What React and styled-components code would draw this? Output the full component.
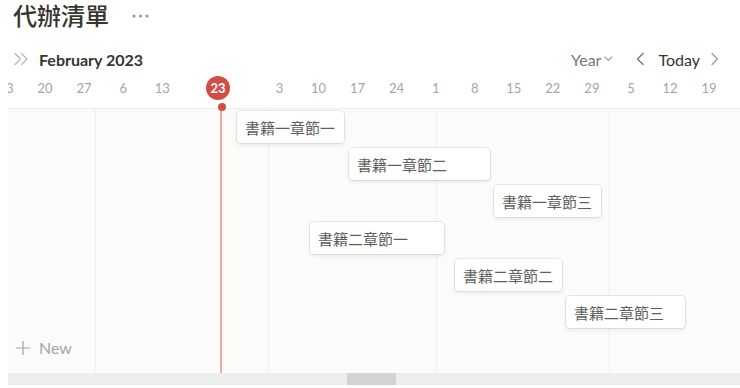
import React from 'react';
import styled, { createGlobalStyle } from 'styled-components';

const GlobalStyle = createGlobalStyle`
  html, body {
    margin: 0;
    padding: 0;
    background: #fff;
  }
  body {
    font-family: "Lato", "Noto Sans CJK TC", sans-serif;
    color: #37352f;
  }
`;

// page x of the first tick, one week apart
const TICK_START = 6;
const WEEK = 39.06;
const OFFSET = 8; // timeline starts 8px in from the page edge

const ticks = ['13', '20', '27', '6', '13', null, null, '3', '10', '17', '24', '1', '8', '15', '22', '29', '5', '12', '19'];

const monthLines = [95, 268, 436, 609];

const tasks = [
  { title: '書籍一章節一', x: 237, width: 107 },
  { title: '書籍一章節二', x: 349, width: 141 },
  { title: '書籍一章節三', x: 494, width: 107 },
  { title: '書籍二章節一', x: 310, width: 134 },
  { title: '書籍二章節二', x: 455, width: 107 },
  { title: '書籍二章節三', x: 566, width: 119 }
];

const Icon = ({ w, h, d, color, sw = 1.3 }) => (
  <svg width={w} height={h} viewBox={`0 0 ${w} ${h}`} fill="none">
    <path d={d} stroke={color} strokeWidth={sw} strokeLinecap="round" strokeLinejoin="round" />
  </svg>
);

function App() {
  return (
    <React.Fragment>
      <GlobalStyle />
      <SC.Page>
        <SC.TitleBar>
          <SC.Title>代辦清單</SC.Title>
          <SC.More>
            <svg width="17" height="4" viewBox="0 0 17 4">
              <circle cx="2" cy="2" r="1.6" fill="#9b9a97" />
              <circle cx="8.5" cy="2" r="1.6" fill="#9b9a97" />
              <circle cx="15" cy="2" r="1.6" fill="#9b9a97" />
            </svg>
          </SC.More>
        </SC.TitleBar>

        <SC.Toolbar>
          <SC.Group>
            <Icon w={16} h={14} d="M2 1.5 L7.5 7 L2 12.5 M8.5 1.5 L14 7 L8.5 12.5" color="#b4b3b0" sw={1.2} />
            <SC.Month>February 2023</SC.Month>
          </SC.Group>
          <SC.Group>
            <SC.Select>
              Year
              <Icon w={9} h={6} d="M1 1 L4.5 4.5 L8 1" color="#a5a5a3" sw={1.1} />
            </SC.Select>
            <SC.NavBtn>
              <Icon w={9} h={14} d="M7 1.5 L1.5 7 L7 12.5" color="#787774" sw={1.4} />
            </SC.NavBtn>
            <SC.Today>Today</SC.Today>
            <SC.NavBtn>
              <Icon w={9} h={14} d="M2 1.5 L7.5 7 L2 12.5" color="#9b9a97" sw={1.4} />
            </SC.NavBtn>
          </SC.Group>
        </SC.Toolbar>

        <SC.Timeline>
          <SC.Axis>
            {ticks.map((t, i) =>
              t ? (
                <SC.Tick key={i} style={{ left: TICK_START + WEEK * i - OFFSET }}>
                  {t}
                </SC.Tick>
              ) : null
            )}
            <SC.TodayBadge>23</SC.TodayBadge>
          </SC.Axis>

          <SC.Canvas>
            {monthLines.map(x => (
              <SC.MonthLine key={x} style={{ left: x - OFFSET }} />
            ))}
            {tasks.map((task, i) => (
              <SC.Card
                key={task.title}
                style={{ left: task.x - OFFSET, top: 2 + 37 * i, width: task.width }}
              >
                {task.title}
              </SC.Card>
            ))}
            <SC.NewBtn>
              <Icon w={14} h={14} d="M7 0.5 V13.5 M0.5 7 H13.5" color="#a5a5a3" sw={1.2} />
              New
            </SC.NewBtn>
          </SC.Canvas>

          <SC.Scrollbar>
            <SC.Thumb />
          </SC.Scrollbar>

          <SC.TodayLine />
          <SC.TodayDot />
        </SC.Timeline>
      </SC.Page>
    </React.Fragment>
  );
}

const SC = {
  Page: styled.div`
    display: flex;
    flex-direction: column;
    width: 740px;
    height: 388px;
    overflow: hidden;
  `,
  TitleBar: styled.div`
    display: flex;
    align-items: center;
    gap: 23px;
    height: 30px;
    padding-left: 13px;
  `,
  Title: styled.h1`
    margin: 0;
    font-family: "Noto Sans CJK TC", sans-serif;
    font-size: 24px;
    font-weight: 500;
    line-height: 30px;
    color: #37352f;
  `,
  More: styled.div`
    display: flex;
    align-items: center;
    padding-top: 1px;
  `,
  Toolbar: styled.div`
    display: flex;
    align-items: center;
    justify-content: space-between;
    height: 28px;
    margin-top: 15px;
    padding: 0 21px 0 13px;
  `,
  Group: styled.div`
    display: flex;
    align-items: center;
    gap: 10px;
  `,
  Month: styled.span`
    font-size: 16px;
    font-weight: 700;
    color: #37352f;
  `,
  Select: styled.span`
    display: flex;
    align-items: center;
    gap: 3px;
    margin-right: 13px;
    font-size: 16px;
    color: #787774;
  `,
  NavBtn: styled.span`
    display: flex;
    align-items: center;
  `,
  Today: styled.span`
    padding-left: 3px;
    font-size: 16px;
    color: #37352f;
  `,
  Timeline: styled.div`
    position: relative;
    display: flex;
    flex-direction: column;
    margin-left: ${OFFSET}px;
    overflow: hidden;
  `,
  Axis: styled.div`
    position: relative;
    height: 35px;
    border-bottom: 1px solid #ededec;
  `,
  Tick: styled.span`
    position: absolute;
    top: 15px;
    transform: translate(-50%, -50%);
    font-size: 13px;
    color: #a5a5a3;
  `,
  TodayBadge: styled.span`
    position: absolute;
    left: ${218 - OFFSET}px;
    top: 15px;
    transform: translate(-50%, -50%);
    display: flex;
    align-items: center;
    justify-content: center;
    width: 24px;
    height: 24px;
    border-radius: 50%;
    background: #d44c47;
    color: #fff;
    font-size: 13px;
    font-weight: 700;
  `,
  Canvas: styled.div`
    position: relative;
    height: 264px;
    background: #fbfbfa;
  `,
  MonthLine: styled.div`
    position: absolute;
    top: 0;
    bottom: 0;
    width: 1px;
    background: #efefee;
  `,
  Card: styled.div`
    position: absolute;
    box-sizing: border-box;
    display: flex;
    align-items: center;
    height: 32px;
    padding: 0 8px;
    background: #fff;
    border-radius: 4px;
    box-shadow: rgba(15, 15, 15, 0.08) 0 0 0 1px, rgba(15, 15, 15, 0.08) 0 2px 4px;
    font-family: "Noto Sans CJK TC", sans-serif;
    font-size: 15px;
    color: #5f5e5a;
    white-space: nowrap;
  `,
  NewBtn: styled.div`
    position: absolute;
    left: 8px;
    bottom: 16px;
    display: flex;
    align-items: center;
    gap: 9px;
    font-size: 16px;
    color: #a5a5a3;
  `,
  Scrollbar: styled.div`
    position: relative;
    height: 12px;
    background: #ededec;
  `,
  Thumb: styled.div`
    position: absolute;
    left: ${347 - OFFSET}px;
    top: 0;
    width: 49px;
    height: 100%;
    background: #d3d3d1;
  `,
  TodayLine: styled.div`
    position: absolute;
    left: ${220 - OFFSET}px;
    top: 34px;
    bottom: 12px;
    width: 2px;
    background: #eba9a4;
  `,
  TodayDot: styled.div`
    position: absolute;
    left: ${221 - OFFSET - 3}px;
    top: 30px;
    width: 8px;
    height: 8px;
    border-radius: 50%;
    background: #d44c47;
  `
};

export default App;
